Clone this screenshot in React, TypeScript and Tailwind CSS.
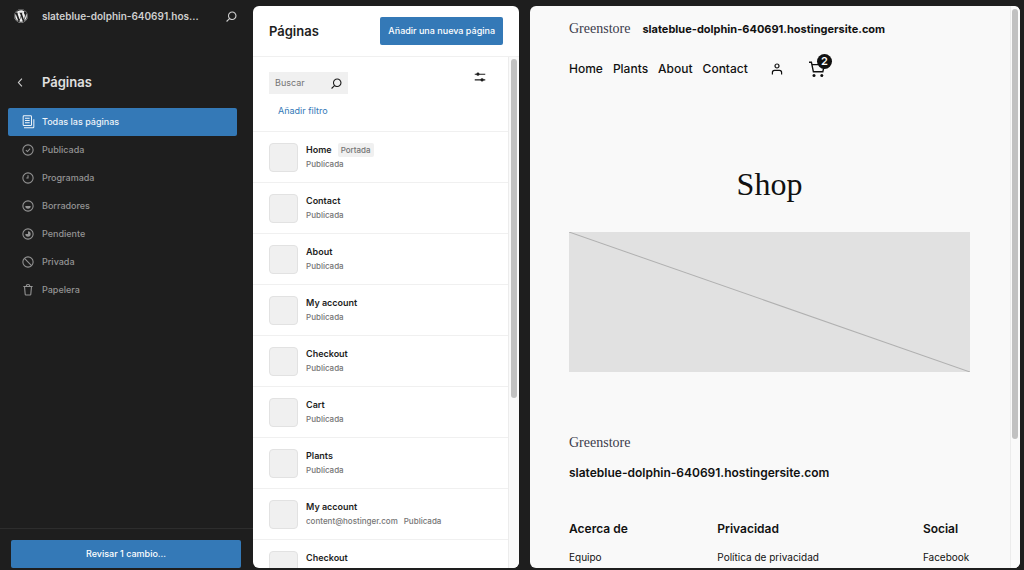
import type { ReactNode } from 'react';
import { FaWordpress } from 'react-icons/fa';

type IconProps = { className?: string };

function SearchIcon({ className }: IconProps) {
  return (
    <svg viewBox="0 0 24 24" fill="currentColor" className={className} aria-hidden="true">
      <path d="M13 5c-3.3 0-6 2.7-6 6 0 1.4.5 2.7 1.3 3.7l-3.8 3.8 1.1 1.1 3.8-3.8c1 .8 2.3 1.3 3.7 1.3 3.3 0 6-2.7 6-6S16.3 5 13 5zm0 10.5c-2.5 0-4.5-2-4.5-4.5s2-4.5 4.5-4.5 4.5 2 4.5 4.5-2 4.5-4.5 4.5z" />
    </svg>
  );
}

function ChevronLeftIcon({ className }: IconProps) {
  return (
    <svg viewBox="0 0 24 24" fill="currentColor" className={className} aria-hidden="true">
      <path d="M14.6 7l-1.2-1L8 12l5.4 6 1.2-1-4.6-5z" />
    </svg>
  );
}

function SettingsIcon({ className }: IconProps) {
  return (
    <svg viewBox="0 0 24 24" fill="currentColor" className={className} aria-hidden="true">
      <path d="M19 7.5h-7.63a2.25 2.25 0 0 0-4.24 0H5V9h2.13a2.25 2.25 0 0 0 4.24 0H19z" />
      <path d="M19 15h-2.13a2.25 2.25 0 0 0-4.24 0H5v1.5h7.63a2.25 2.25 0 0 0 4.24 0H19z" />
    </svg>
  );
}

function StatusIcon({ children }: { children?: ReactNode }) {
  return (
    <svg viewBox="0 0 24 24" fill="none" stroke="currentColor" strokeWidth="1.6" className="size-4" aria-hidden="true">
      {children}
    </svg>
  );
}

const ring = <circle cx="12" cy="12" r="7.7" />;

const views = [
  {
    label: 'Todas las páginas',
    icon: (
      <svg viewBox="0 0 24 24" fill="currentColor" className="size-4" aria-hidden="true">
        <path d="M14.5 5.5h-7V7h7V5.5ZM7.5 9h7v1.5h-7V9Zm7 3.5h-7V14h7v-1.5Z" />
        <path
          fillRule="evenodd"
          d="M16 2H6a2 2 0 0 0-2 2v12a2 2 0 0 0 2 2h10a2 2 0 0 0 2-2V4a2 2 0 0 0-2-2ZM6 3.5h10a.5.5 0 0 1 .5.5v12a.5.5 0 0 1-.5.5H6a.5.5 0 0 1-.5-.5V4a.5.5 0 0 1 .5-.5Z"
        />
        <path d="M20 8v11c0 .69-.31 1-1 1H6v1.5h13c1.52 0 2.5-.98 2.5-2.5V8H20Z" />
      </svg>
    ),
  },
  { label: 'Publicada', icon: <StatusIcon>{ring}<path d="m8.8 12.2 2.4 2.2 4-4.6" /></StatusIcon> },
  { label: 'Programada', icon: <StatusIcon>{ring}<path d="M12 8v4H9.5" /></StatusIcon> },
  {
    label: 'Borradores',
    icon: <StatusIcon>{ring}<path d="M8 12h8a4 4 0 0 1-8 0z" fill="currentColor" stroke="none" /></StatusIcon>,
  },
  {
    label: 'Pendiente',
    icon: <StatusIcon>{ring}<path d="M12 8a4 4 0 1 1-4 4h4z" fill="currentColor" stroke="none" /></StatusIcon>,
  },
  { label: 'Privada', icon: <StatusIcon>{ring}<path d="m6.7 6.7 10.6 10.6" /></StatusIcon> },
  {
    label: 'Papelera',
    icon: <StatusIcon><path d="M5 6.8h14M9.3 6.5a2.7 2.7 0 0 1 5.4 0M6.8 7l1 11.5c.1.7.5 1 1.1 1h6.2c.6 0 1-.3 1.1-1L17.2 7" /></StatusIcon>,
  },
];

const pages = [
  { title: 'Home', badge: 'Portada', status: 'Publicada' },
  { title: 'Contact', status: 'Publicada' },
  { title: 'About', status: 'Publicada' },
  { title: 'My account', status: 'Publicada' },
  { title: 'Checkout', status: 'Publicada' },
  { title: 'Cart', status: 'Publicada' },
  { title: 'Plants', status: 'Publicada' },
  { title: 'My account', author: 'content@hostinger.com', status: 'Publicada' },
  { title: 'Checkout' },
];

const footerColumns = [
  { title: 'Acerca de', link: 'Equipo' },
  { title: 'Privacidad', link: 'Política de privacidad' },
  { title: 'Social', link: 'Facebook' },
];

function Sidebar() {
  return (
    <aside className="flex w-[253px] shrink-0 flex-col text-[#cfcfcf]">
      <header className="flex h-8 items-center pr-3 pl-3.5">
        <a href="#" aria-label="WordPress" className="mr-3.5">
          <FaWordpress className="size-3.5 text-[#f0f0f0]" />
        </a>
        <a href="#" className="flex-1 text-[10px] leading-4 font-semibold">
          slateblue-dolphin-640691.hos...
        </a>
        <button aria-label="Buscar" className="mr-px">
          <SearchIcon className="size-[17px]" />
        </button>
      </header>

      <div className="mt-10 flex items-center pl-3">
        <button aria-label="Atrás" className="mr-[13px]">
          <ChevronLeftIcon className="size-[17px]" />
        </button>
        <h1 className="text-[13px] leading-5 font-semibold text-[#e0e0e0]">Páginas</h1>
      </div>

      <nav className="mt-4 flex flex-col pr-4 pl-2">
        {views.map((view, i) => (
          <a
            key={view.label}
            href="#"
            className={`flex h-7 items-center gap-1.5 rounded-xs pl-3 text-[9px] font-medium ${
              i === 0 ? 'bg-[#3479b7] text-[#eef4f9]' : 'text-[#949494]'
            }`}
          >
            {view.icon}
            {view.label}
          </a>
        ))}
      </nav>

      <div className="mt-auto border-t border-[#2d2d2d] pt-2.5 pr-3 pb-0.5 pl-[11px]">
        <button className="h-7 w-full rounded-xs bg-[#3479b7] text-[9px] font-medium text-white">
          Revisar 1 cambio...
        </button>
      </div>
    </aside>
  );
}

function PageList() {
  return (
    <section className="mt-1.5 mb-0.5 flex w-[266px] shrink-0 flex-col overflow-hidden rounded-md bg-white">
      <header className="flex shrink-0 items-center justify-between border-b border-[#f0f0f0] px-4 py-[11px]">
        <h2 className="text-[13px] leading-7 font-semibold text-[#1e1e1e]">Páginas</h2>
        <button className="h-7 rounded-xs bg-[#3479b7] px-2 text-[9px] font-medium text-white">
          Añadir una nueva página
        </button>
      </header>

      <div className="flex min-h-0 flex-1">
        <div className="min-w-0 flex-1 overflow-hidden">
          <div className="border-b border-[#f0f0f0] px-4 pt-[11px] pb-3">
            <div className="flex items-start justify-between">
              <div className="mt-1 flex h-[22px] w-[79px] items-center bg-[#f0f0f0] pr-[3px] pl-1.5">
                <input
                  type="text"
                  aria-label="Buscar"
                  placeholder="Buscar"
                  className="w-full min-w-0 bg-transparent text-[9px] outline-none placeholder:text-[#757575]"
                />
                <SearchIcon className="size-[17px] shrink-0 text-[#1e1e1e]" />
              </div>
              <button aria-label="Opciones de vista" className="mr-[3px]">
                <SettingsIcon className="size-[18px] text-[#1e1e1e]" />
              </button>
            </div>
            <button className="mt-[9px] block px-[9px] text-[9px] leading-4 text-[#3479b7]">Añadir filtro</button>
          </div>

          <ul>
            {pages.map((page, i) => (
              <li key={i} className="flex h-[51px] items-center gap-2 border-b border-[#f0f0f0] px-4">
                <div className="size-[29px] shrink-0 rounded-sm border border-[#e2e2e2] bg-[#f0f0f0]" />
                <div className="h-7">
                  <div className="flex h-3.5 items-center gap-1.5">
                    <a href="#" className="text-[9px] leading-3.5 font-semibold text-[#1e1e1e]">
                      {page.title}
                    </a>
                    {page.badge && (
                      <span className="rounded-xs bg-[#f0f0f0] px-[3px] text-[8px] leading-3.5 font-medium text-[#757575]">
                        {page.badge}
                      </span>
                    )}
                  </div>
                  {page.status && (
                    <div className="flex gap-1.5 text-[8px] leading-3.5 font-medium text-[#757575]">
                      {page.author && <span>{page.author}</span>}
                      <span>{page.status}</span>
                    </div>
                  )}
                </div>
              </li>
            ))}
          </ul>
        </div>
        <div className="w-[11px] shrink-0 border-l border-[#ececec] bg-[#fafafa] pt-0.5 pl-0.5">
          <div className="h-2/3 w-1.5 rounded-full bg-[#c1c1c1]" />
        </div>
      </div>
    </section>
  );
}

function Preview() {
  return (
    <main className="mt-1.5 mr-1 mb-0.5 ml-[11px] flex min-w-0 flex-1 overflow-hidden rounded-md bg-[#f9f9f9] text-[#111]">
      <div className="min-w-0 flex-1 overflow-hidden pr-10 pl-[39px]">
        <header className="pt-[13px]">
          <div className="flex items-center gap-3">
            <span className="font-['Liberation_Serif',serif] text-[14px] leading-5 text-[#3c3c4c]">Greenstore</span>
            <a href="#" className="text-[11px] leading-5 font-bold">
              slateblue-dolphin-640691.hostingersite.com
            </a>
          </div>
          <div className="mt-[18px] flex h-6 items-center">
            <nav className="flex gap-2.5 text-[12px] font-medium">
              <a href="#">Home</a>
              <a href="#">Plants</a>
              <a href="#">About</a>
              <a href="#">Contact</a>
            </nav>
            <a href="#" aria-label="Mi cuenta" className="ml-[21px]">
              <svg viewBox="0 0 16 16" fill="none" stroke="currentColor" strokeWidth="1.2" className="size-4">
                <circle cx="8" cy="5" r="2" />
                <path d="M3.4 13.4v-1.9c0-1.4.8-2.1 2.1-2.1h5c1.3 0 2.1.7 2.1 2.1v1.9" />
              </svg>
            </a>
            <button aria-label="Carrito" className="relative ml-6">
              <svg viewBox="0 0 16 16" fill="none" stroke="currentColor" strokeWidth="1.4" className="size-4">
                <path d="M0 1.2h2.4l2 9.6h9.4L15.4 3.6H3" />
                <circle cx="5" cy="14.4" r="1.5" fill="currentColor" stroke="none" />
                <circle cx="12.8" cy="14.4" r="1.5" fill="currentColor" stroke="none" />
              </svg>
              <span className="absolute -top-[7px] left-2 flex size-[15px] items-center justify-center rounded-full bg-[#111] text-[11px] font-semibold text-white">
                2
              </span>
            </button>
          </div>
        </header>

        <h1 className="mt-[83px] text-center font-['Liberation_Serif',serif] text-[32px] leading-10">Shop</h1>
        <svg viewBox="0 0 400 140" preserveAspectRatio="none" className="mt-7 block h-[140px] w-full bg-[#e1e1e1]">
          <path d="M0 0 400 140" stroke="#b0b0b0" strokeWidth="1" />
        </svg>

        <footer className="mt-[61px]">
          <div className="font-['Liberation_Serif',serif] text-[14px] leading-5 text-[#3c3c4c]">Greenstore</div>
          <a href="#" className="mt-2.5 block text-[12px] leading-5 font-semibold">
            slateblue-dolphin-640691.hostingersite.com
          </a>
          <div className="mt-9 grid grid-cols-[148fr_205fr_47fr]">
            {footerColumns.map((col) => (
              <div key={col.title} className="min-w-0 whitespace-nowrap">
                <h2 className="text-[12px] leading-5 font-semibold">{col.title}</h2>
                <a href="#" className="mt-2 block text-[10px] leading-5">
                  {col.link}
                </a>
              </div>
            ))}
          </div>
        </footer>
      </div>
      <div className="w-2.5 shrink-0 border-l border-[#ececec] bg-[#fafafa] pt-[3px] pl-px">
        <div className="h-[77%] w-1.5 rounded-full bg-[#c1c1c1]" />
      </div>
    </main>
  );
}

export default function App() {
  return (
    <div className="flex h-screen overflow-hidden bg-[#1e1e1e] font-['Inter',sans-serif]">
      <Sidebar />
      <PageList />
      <Preview />
    </div>
  );
}
